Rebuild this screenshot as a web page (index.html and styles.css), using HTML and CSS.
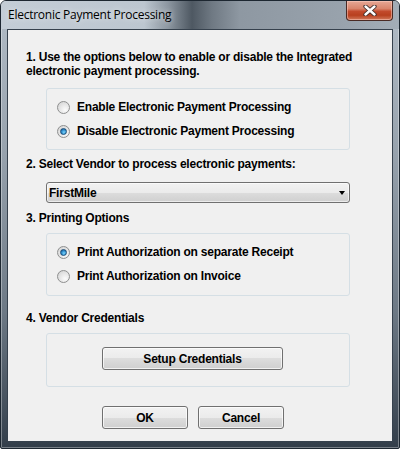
FILE: index.html
```html
<!DOCTYPE html>
<html>
<head>
    <meta charset="UTF-8">
    <meta name="viewport" content="width=device-width, initial-scale=1.0">
    <title>Electronic Payment Processing</title>
    <link rel="stylesheet" href="styles.css">
</head>
<body>
    <div class="window">
        <div class="titlebar">
            <span class="title">Electronic Payment Processing</span>
            <div class="close-btn">
                <svg width="14" height="11" viewBox="0 0 14 11">
                    <path d="M2.5 1.5 L11.5 9.5 M11.5 1.5 L2.5 9.5" stroke="#3a2a28" stroke-width="4.2" stroke-linecap="round"/>
                    <path d="M2.5 1.5 L11.5 9.5 M11.5 1.5 L2.5 9.5" stroke="#fff" stroke-width="2.4" stroke-linecap="round"/>
                </svg>
            </div>
        </div>

        <div class="client">
            <div class="label label-first">1. Use the options below to enable or disable the Integrated electronic payment processing.</div>

            <div class="groupbox group-enable">
                <div class="radio-row"><span class="radio"></span>Enable Electronic Payment Processing</div>
                <div class="radio-row"><span class="radio checked"></span>Disable Electronic Payment Processing</div>
            </div>

            <div class="label label-vendor">2. Select Vendor to process electronic payments:</div>

            <div class="dropdown">
                <span>FirstMile</span>
                <span class="arrow"></span>
            </div>

            <div class="label label-print">3. Printing Options</div>

            <div class="groupbox group-print">
                <div class="radio-row"><span class="radio checked"></span>Print Authorization on separate Receipt</div>
                <div class="radio-row"><span class="radio"></span>Print Authorization on Invoice</div>
            </div>

            <div class="label label-cred">4. Vendor Credentials</div>

            <div class="groupbox group-cred">
                <div class="button btn-setup">Setup Credentials</div>
            </div>

            <div class="footer">
                <div class="button btn-small">OK</div>
                <div class="button btn-small">Cancel</div>
            </div>
        </div>
    </div>
</body>
</html>
```

FILE: styles.css
```css
/* dialog styles */
body {
    margin: 0;
    padding: 0;
    background-color: #fff;
    font-family: "Liberation Sans", Arial, sans-serif;
}

.window {
    width: 400px;
    height: 449px;
    box-sizing: border-box;
    border: 1px solid #1d2731;
    border-radius: 6px 6px 2px 2px;
    background: linear-gradient(180deg, #b3bdc7 0%, #96a1ac 35%, #6c7884 70%, #333e4a 100%);
    box-shadow: inset 0 0 0 1px rgba(255, 255, 255, 0.35);
    display: flex;
    flex-direction: column;
}

.titlebar {
    height: 28px;
    display: flex;
    justify-content: space-between;
    align-items: flex-start;
    border-radius: 5px 5px 0 0;
    background: linear-gradient(90deg, #c4cdd6 0%, #bcc6d0 36%, #8c96a0 42%, #4e5862 48%, #6f7983 53%, #8e98a2 60%, #98a2ac 85%, #a3adb7 100%);
}

.title {
    font-family: "Open Sans", "Noto Sans", sans-serif;
    font-size: 12px;
    letter-spacing: -0.25px;
    color: #000;
    margin: 5px 0 0 7px;
    text-shadow: 0 0 6px rgba(255, 255, 255, 0.8);
}

.close-btn {
    width: 47px;
    height: 20px;
    margin-right: 6px;
    box-sizing: border-box;
    border: 1px solid #4a2a24;
    border-top: none;
    border-radius: 0 0 4px 4px;
    background: linear-gradient(180deg, #e6a896 0%, #d9856c 40%, #c24a2c 55%, #b8401f 75%, #d27a5c 100%);
    box-shadow: inset 0 0 0 1px rgba(255, 210, 200, 0.5);
    display: flex;
    justify-content: center;
    align-items: center;
}

.client {
    flex: 1;
    margin: 0 6px 6px;
    border: 1px solid #36414d;
    background-color: #f0f0f0;
    padding: 20px 0 0 18px;
    font-size: 12px;
    font-weight: bold;
    letter-spacing: -0.22px;
    color: #000;
    line-height: 14px;
}

.label {
    width: 340px;
}

.groupbox {
    width: 304px;
    box-sizing: border-box;
    margin-left: 20px;
    border: 1px solid #d5dfe5;
    border-radius: 3px;
}

.group-enable {
    margin-top: 10px;
    padding: 6px 0 6px;
}

.label-vendor {
    margin-top: 7px;
}

.dropdown {
    width: 304px;
    height: 21px;
    box-sizing: border-box;
    margin: 11px 0 0 20px;
    padding: 0 4px 0 2px;
    border: 1px solid #707070;
    border-radius: 3px;
    background: linear-gradient(180deg, #f2f2f2 0%, #ebebeb 50%, #dddddd 50%, #cfcfcf 100%);
    box-shadow: inset 0 0 0 1px rgba(255, 255, 255, 0.6);
    display: flex;
    justify-content: space-between;
    align-items: center;
}

.arrow {
    width: 0;
    height: 0;
    border-left: 3.5px solid transparent;
    border-right: 3.5px solid transparent;
    border-top: 4px solid #000;
}

.label-print {
    margin-top: 8px;
}

.group-print {
    margin-top: 8px;
    padding: 6px 0 7px;
}

.label-cred {
    margin-top: 15px;
}

.group-cred {
    margin-top: 8px;
    padding: 13px 0 16px 55px;
}

.radio-row {
    height: 24px;
    display: flex;
    align-items: center;
    padding-left: 10px;
}

.radio {
    width: 13px;
    height: 13px;
    box-sizing: border-box;
    margin-right: 7px;
    border: 1px solid #8e8f8f;
    border-radius: 50%;
    background: radial-gradient(circle at 65% 70%, #fbfbfb 0%, #e8e8e8 45%, #cfcfcf 100%);
    position: relative;
}

.radio.checked::after {
    content: "";
    position: absolute;
    left: 2px;
    top: 2px;
    width: 7px;
    height: 7px;
    box-sizing: border-box;
    border-radius: 50%;
    border: 1px solid #1b4e78;
    background: radial-gradient(circle at 60% 65%, #7fd6fa 0%, #2f8fd0 50%, #134d82 100%);
}

.button {
    height: 23px;
    box-sizing: border-box;
    border: 1px solid #707070;
    border-radius: 3px;
    background: linear-gradient(180deg, #f2f2f2 0%, #ebebeb 50%, #dddddd 50%, #cfcfcf 100%);
    box-shadow: inset 0 0 0 1px rgba(255, 255, 255, 0.7);
    display: flex;
    justify-content: center;
    align-items: center;
}

.btn-setup {
    width: 181px;
}

.footer {
    margin: 19px 0 0 76px;
    display: flex;
    gap: 10px;
}

.btn-small {
    width: 86px;
}
```
